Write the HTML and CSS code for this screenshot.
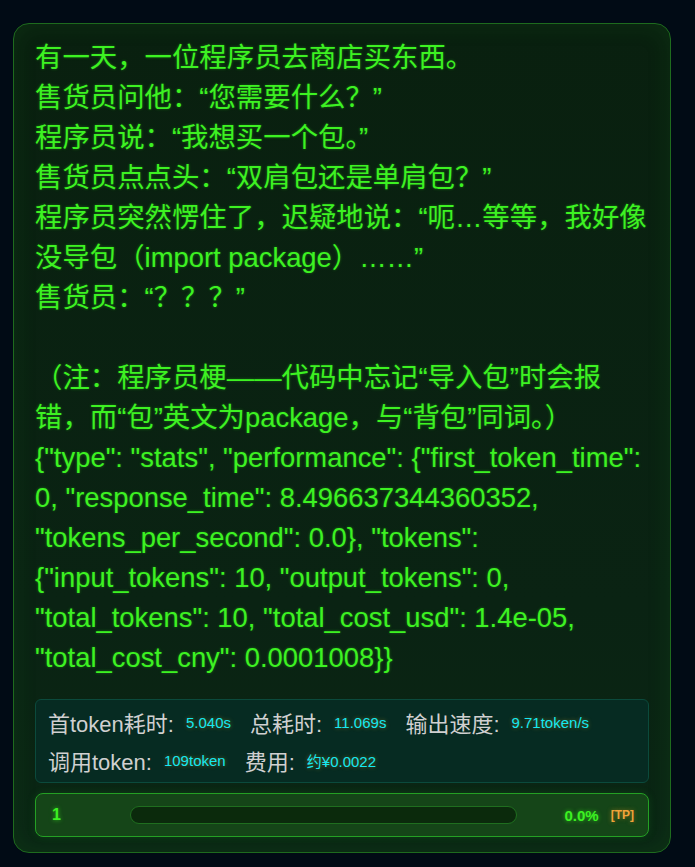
FILE: index.html
```html
<!DOCTYPE html>
<html lang="zh">
<head>
<meta charset="utf-8">
<link rel="stylesheet" href="styles.css">
</head>
<body>
<div class="card">
  <div class="content">有一天，一位程序员去商店买东西。
售货员问他：“您需要什么？”
程序员说：“我想买一个包。”
售货员点点头：“双肩包还是单肩包？”
程序员突然愣住了，迟疑地说：“呃…等等，我好像没导包（import package）……”
售货员：“？？？”

（注：程序员梗——代码中忘记“导入包”时会报错，而“包”英文为package，与“背包”同词。）
{"type": "stats", "performance": {"first_token_time": 0, "response_time": 8.496637344360352, "tokens_per_second": 0.0}, "tokens": {"input_tokens": 10, "output_tokens": 0, "total_tokens": 10, "total_cost_usd": 1.4e-05, "total_cost_cny": 0.0001008}}</div>
  <div class="stats">
    <span class="stat"><span class="label">首token耗时:</span><span class="value">5.040s</span></span>
    <span class="stat"><span class="label">总耗时:</span><span class="value">11.069s</span></span>
    <span class="stat"><span class="label">输出速度:</span><span class="value">9.71token/s</span></span>
    <span class="stat"><span class="label">调用token:</span><span class="value">109token</span></span>
    <span class="stat"><span class="label">费用:</span><span class="value">约¥0.0022</span></span>
  </div>
  <div class="progress">
    <span class="num">1</span>
    <div class="bar"><div class="fill" style="width:0%"></div></div>
    <span class="pct">0.0%</span>
    <span class="tag">[TP]</span>
  </div>
</div>
</body>
</html>
```
FILE: styles.css
```css
html, body {
  margin: 0;
  padding: 0;
  background: #010b15;
}
body {
  padding: 23px 24px 15px 13px;
  font-family: "Liberation Sans", "Noto Sans CJK SC", sans-serif;
}
.card {
  width: 614px;
  padding: 14px 21px 15px 21px;
  border: 1px solid #1e6b1e;
  border-radius: 16px;
  background: linear-gradient(180deg, #09200f 0%, #0a2313 70%, #0a2614 100%);
  box-shadow: inset 0 0 24px rgba(40, 160, 40, 0.12);
}
.content {
  white-space: pre-wrap;
  word-break: break-word;
  color: #3df222;
  font-size: 27.4px;
  line-height: 40px;
  text-shadow: 0 0 3px rgba(60, 255, 30, 0.35);
}
.stats {
  margin-top: 21px;
  display: flex;
  flex-wrap: wrap;
  column-gap: 19px;
  row-gap: 0;
  padding: 3px 12px 3px 12px;
  border: 1px solid #0b4a3c;
  border-radius: 6px;
  background: #062b22;
}
.stat {
  display: flex;
  align-items: center;
  height: 38px;
}
.label {
  color: #d0d0d0;
  font-size: 22px;
}
.value {
  color: #16e8f0;
  font-size: 15px;
  margin-left: 12px;
  text-shadow: 0 0 4px rgba(255, 190, 40, 0.4);
}
.progress {
  margin-top: 10px;
  display: flex;
  align-items: center;
  height: 42px;
  padding: 0 14px 0 16px;
  border: 1px solid #24a024;
  border-radius: 8px;
  background: #154518;
  box-shadow: 0 0 8px rgba(40, 200, 40, 0.15);
}
.num {
  color: #3cf022;
  font-weight: bold;
  font-size: 16px;
  width: 78px;
  text-shadow: 0 0 4px rgba(60, 255, 30, 0.6);
}
.bar {
  width: 385px;
  height: 16px;
  border: 1px solid #1f6e1f;
  border-radius: 9px;
  background: #0b2a0c;
  overflow: hidden;
}
.fill {
  height: 100%;
  background: #3cf022;
}
.pct {
  margin-left: auto;
  color: #3cf022;
  font-weight: bold;
  font-size: 15px;
  text-shadow: 0 0 4px rgba(60, 255, 30, 0.6);
}
.tag {
  margin-left: 12px;
  color: #f0a43a;
  font-weight: bold;
  font-size: 12px;
  text-shadow: 0 0 4px rgba(240, 160, 40, 0.5);
}
```
